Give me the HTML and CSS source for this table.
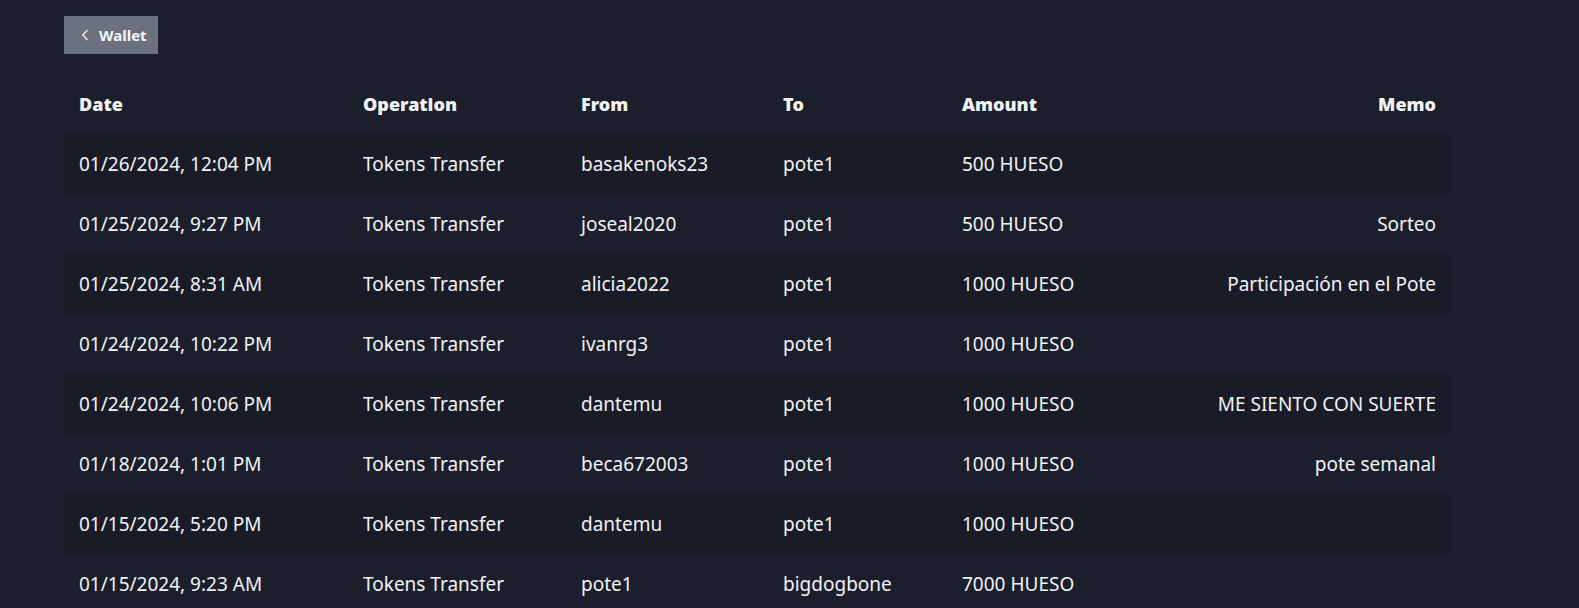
FILE: index.html
```html
<!DOCTYPE html>
<html lang="es">
<head>
<meta charset="utf-8">
<title>Wallet history</title>
<link rel="stylesheet" href="styles.css">
</head>
<body>
<div class="page">
  <button class="back-btn" type="button">
    <svg class="chev" width="8" height="12" viewBox="0 0 8 12"><path d="M6.5 1 L1.8 6 L6.5 11" fill="none" stroke="#f2f2f2" stroke-width="1.3"/></svg>
    <span>Wallet</span>
  </button>
  <table class="history">
    <colgroup>
      <col class="c-date"><col class="c-op"><col class="c-from"><col class="c-to"><col class="c-amount"><col class="c-memo">
    </colgroup>
    <thead>
      <tr><th>Date</th><th>Operation</th><th>From</th><th>To</th><th>Amount</th><th class="memo">Memo</th></tr>
    </thead>
    <tbody>
      <tr><td>01/26/2024, 12:04 PM</td><td>Tokens Transfer</td><td>basakenoks23</td><td>pote1</td><td>500 HUESO</td><td class="memo"></td></tr>
      <tr><td>01/25/2024, 9:27 PM</td><td>Tokens Transfer</td><td>joseal2020</td><td>pote1</td><td>500 HUESO</td><td class="memo">Sorteo</td></tr>
      <tr><td>01/25/2024, 8:31 AM</td><td>Tokens Transfer</td><td>alicia2022</td><td>pote1</td><td>1000 HUESO</td><td class="memo">Participación en el Pote</td></tr>
      <tr><td>01/24/2024, 10:22 PM</td><td>Tokens Transfer</td><td>ivanrg3</td><td>pote1</td><td>1000 HUESO</td><td class="memo"></td></tr>
      <tr><td>01/24/2024, 10:06 PM</td><td>Tokens Transfer</td><td>dantemu</td><td>pote1</td><td>1000 HUESO</td><td class="memo">ME SIENTO CON SUERTE</td></tr>
      <tr><td>01/18/2024, 1:01 PM</td><td>Tokens Transfer</td><td>beca672003</td><td>pote1</td><td>1000 HUESO</td><td class="memo">pote semanal</td></tr>
      <tr><td>01/15/2024, 5:20 PM</td><td>Tokens Transfer</td><td>dantemu</td><td>pote1</td><td>1000 HUESO</td><td class="memo"></td></tr>
      <tr><td>01/15/2024, 9:23 AM</td><td>Tokens Transfer</td><td>pote1</td><td>bigdogbone</td><td>7000 HUESO</td><td class="memo"></td></tr>
    </tbody>
  </table>
</div>
</body>
</html>
```
FILE: styles.css
```css
html, body {
  margin: 0;
  padding: 0;
  background: #1b1f2b;
  color: #f1f2f4;
  font-family: "Noto Sans", "Open Sans", sans-serif;
}
.page {
  padding: 16px 0 0 64px;
}
.back-btn {
  display: flex;
  align-items: center;
  gap: 10px;
  height: 38px;
  width: 94px;
  padding: 0 0 0 17px;
  border: 0;
  border-radius: 0;
  background: #6c727d;
  color: #f4f5f7;
  font-family: "Noto Sans", sans-serif;
  font-size: 15px;
  font-weight: 700;
}
.chev { display: block; }
.history {
  margin-top: 20px;
  width: 1387px;
  border-collapse: collapse;
  table-layout: fixed;
  font-size: 19px;
}
.c-date { width: 284px; }
.c-op { width: 218px; }
.c-from { width: 202px; }
.c-to { width: 179px; }
.c-amount { width: 250px; }
.history th, .history td {
  height: 60px;
  padding: 0 15px;
  text-align: left;
  vertical-align: middle;
  white-space: nowrap;
}
.history th {
  font-size: 18px;
  font-weight: 900;
}
.history td {
  font-weight: 400;
}
.history .memo { text-align: right; }
.history tbody tr:nth-child(odd) { background: #191c27; }
```
